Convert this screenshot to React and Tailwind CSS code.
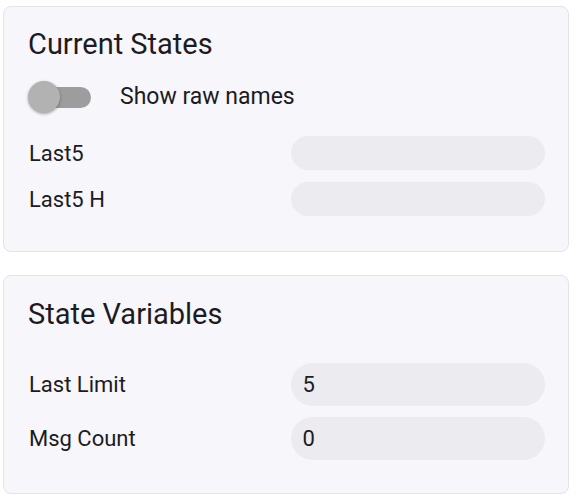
export default function App() {
  return (
    <div className="min-h-[500px] bg-white pt-[6px] pl-[3px] pr-[9px] font-['Roboto',sans-serif] text-[#1c1b1f]">
      {/* Current states card */}
      <div className="rounded-lg border border-[#e4e3e9] bg-[#f7f6fb] pt-[21px] pb-[35px] pl-[24px] pr-[23px]">
        <h2 className="text-[29px] leading-[32px]">Current States</h2>
        <div className="mt-[20px] flex h-[34px] items-center">
          <div className="relative h-[34px] w-[64px]">
            <div className="absolute left-[4px] top-[7px] h-[21px] w-[59px] rounded-full bg-[#9d9d9d]" />
            <div className="absolute left-0 top-[1px] h-[32px] w-[32px] rounded-full bg-[#b2b2b2] shadow-[0_1px_3px_rgba(0,0,0,0.35)]" />
          </div>
          <span className="ml-[28px] text-[23px]">Show raw names</span>
        </div>
        <div className="mt-[22px] grid grid-cols-2 gap-x-2 gap-y-3">
          <div className="flex h-[34px] items-center pl-[1px] text-[22px]">Last5</div>
          <div className="h-[34px] rounded-full bg-[#ecebf0]" />
          <div className="flex h-[34px] items-center pl-[1px] text-[22px]">Last5 H</div>
          <div className="h-[34px] rounded-full bg-[#ecebf0]" />
        </div>
      </div>

      {/* State variables card */}
      <div className="mt-[23px] rounded-lg border border-[#e4e3e9] bg-[#f7f6fb] pt-[22px] pb-[33px] pl-[24px] pr-[23px]">
        <h2 className="text-[29px] leading-[32px]">State Variables</h2>
        <div className="mt-[33px] grid grid-cols-2 gap-x-2 gap-y-[11px]">
          <div className="flex h-[43px] items-center pl-[1px] text-[22px]">Last Limit</div>
          <div className="flex h-[43px] items-center rounded-full bg-[#ecebf0] pl-[12px] text-[22px]">5</div>
          <div className="flex h-[43px] items-center pl-[1px] text-[22px]">Msg Count</div>
          <div className="flex h-[43px] items-center rounded-full bg-[#ecebf0] pl-[12px] text-[22px]">0</div>
        </div>
      </div>
    </div>
  );
}
